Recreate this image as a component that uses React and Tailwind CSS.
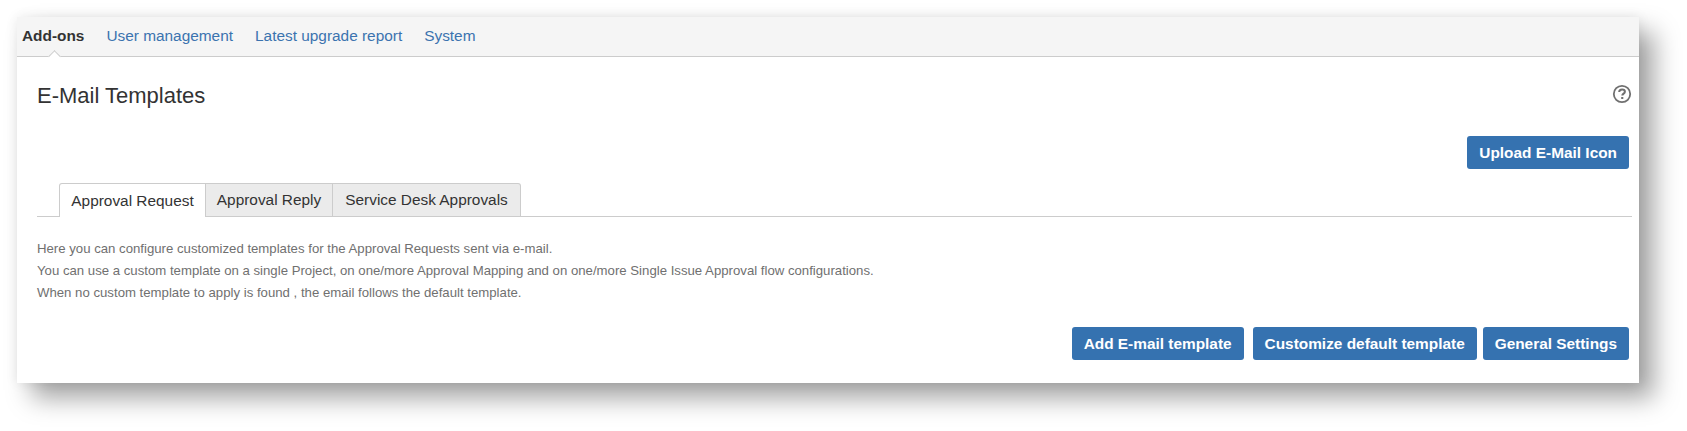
const navItems = ["User management", "Latest upgrade report", "System"];

function BlueButton({ children }) {
  return (
    <button className="h-[33px] rounded-[3px] bg-[#3572b0] px-[12px] text-[15.4px] font-bold text-white">
      {children}
    </button>
  );
}

export default function App() {
  return (
    <div className="h-[431px] w-[1687px] overflow-hidden bg-white pl-[17px] pt-[17px] font-['Liberation_Sans',Arial,sans-serif]">
      <div className="flex h-[366px] w-[1622px] flex-col bg-white shadow-[0_0_12px_rgba(0,0,0,0.08),15px_15px_24px_rgba(0,0,0,0.36)]">

        {/* top nav */}
        <div className="relative flex h-[40px] items-center gap-[22px] border-b border-[#ccc] bg-[#f5f5f5] pb-[2px] pl-[5px] text-[15.4px]">
          <span className="font-bold text-[#333]">Add-ons</span>
          {navItems.map((item) => (
            <span key={item} className="text-[#3b73af]">{item}</span>
          ))}
          <span className="absolute bottom-[-5px] left-[33px] h-[9px] w-[9px] rotate-45 border-l border-t border-[#ccc] bg-white" />
        </div>

        <div className="flex flex-1 flex-col pl-[20px] pr-[7px]">
          <div className="flex items-start justify-between pt-[24px]">
            <h1 className="text-[22px] leading-[30px] text-[#333]">E-Mail Templates</h1>
            <svg className="mt-[3px]" width="20" height="20" viewBox="0 0 20 20" fill="none">
              <circle cx="10" cy="10" r="8.2" stroke="#707070" strokeWidth="1.8" />
              <path d="M7.2 8c0-1.6 1.2-2.6 2.9-2.6s2.8 1 2.8 2.3c0 1.9-2.6 2-2.6 3.9" stroke="#707070" strokeWidth="2" />
              <rect x="9.2" y="13" width="2.1" height="2" fill="#707070" />
            </svg>
          </div>

          <div className="mt-[25px] flex justify-end pr-[3px]">
            <BlueButton>Upload E-Mail Icon</BlueButton>
          </div>

          {/* tabs */}
          <div className="mt-[14px] flex h-[34px] items-end border-b border-[#ccc] pl-[22px] text-[15.4px]">
            <div className="-mb-px flex h-[34px] w-[147px] items-center justify-center rounded-tl-[3px] border border-b-0 border-[#ccc] bg-white text-[#333]">Approval Request</div>
            <div className="-mb-px flex h-[34px] w-[127px] items-center justify-center border-y border-r border-[#ccc] bg-[#ebebeb] text-[#333]">Approval Reply</div>
            <div className="-mb-px flex h-[34px] w-[188px] items-center justify-center rounded-tr-[3px] border-y border-r border-[#ccc] bg-[#ebebeb] text-[#333]">Service Desk Approvals</div>
          </div>

          <div className="mt-[21px] text-[13.2px] leading-[22px] text-[#707070]">
            <p>Here you can configure customized templates for the Approval Requests sent via e-mail.</p>
            <p>You can use a custom template on a single Project, on one/more Approval Mapping and on one/more Single Issue Approval flow configurations.</p>
            <p>When no custom template to apply is found , the email follows the default template.</p>
          </div>

          <div className="mt-[23px] flex justify-end pr-[3px]">
            <div className="mr-[9px]"><BlueButton>Add E-mail template</BlueButton></div>
            <div className="mr-[6px]"><BlueButton>Customize default template</BlueButton></div>
            <BlueButton>General Settings</BlueButton>
          </div>
        </div>
      </div>
    </div>
  );
}
